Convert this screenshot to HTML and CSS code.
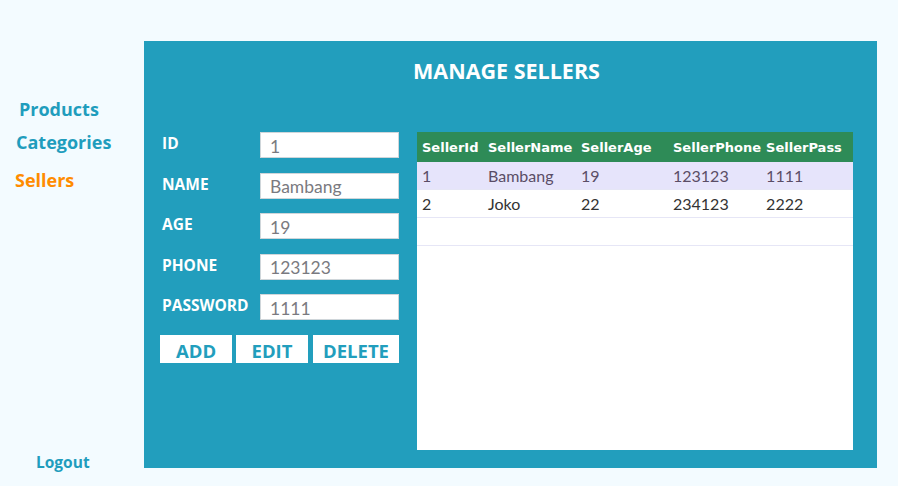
FILE: index.html
```html
<!DOCTYPE html>
<html lang="en">
<head>
    <meta charset="UTF-8">
    <title>Manage Sellers</title>
    <link rel="stylesheet" href="styles.css">
</head>
<body>
    <div class="app">
        <nav class="sidebar">
            <a class="nav-link products">Products</a>
            <a class="nav-link categories">Categories</a>
            <a class="nav-link sellers active">Sellers</a>
            <a class="logout">Logout</a>
        </nav>
        <main class="panel">
            <h1 class="title">MANAGE SELLERS</h1>
            <div class="content">
                <form class="seller-form">
                    <div class="field">
                        <label>ID</label>
                        <input type="text" value="1">
                    </div>
                    <div class="field">
                        <label>NAME</label>
                        <input type="text" value="Bambang">
                    </div>
                    <div class="field">
                        <label>AGE</label>
                        <input type="text" value="19">
                    </div>
                    <div class="field">
                        <label>PHONE</label>
                        <input type="text" value="123123">
                    </div>
                    <div class="field">
                        <label>PASSWORD</label>
                        <input type="text" value="1111">
                    </div>
                    <div class="buttons">
                        <button type="button" class="btn btn-add">ADD</button>
                        <button type="button" class="btn btn-edit">EDIT</button>
                        <button type="button" class="btn btn-delete">DELETE</button>
                    </div>
                </form>
                <div class="grid">
                    <table>
                        <thead>
                            <tr>
                                <th class="col-id">SellerId</th>
                                <th class="col-name">SellerName</th>
                                <th class="col-age">SellerAge</th>
                                <th class="col-phone">SellerPhone</th>
                                <th>SellerPass</th>
                            </tr>
                        </thead>
                        <tbody>
                            <tr class="selected">
                                <td>1</td>
                                <td>Bambang</td>
                                <td>19</td>
                                <td>123123</td>
                                <td>1111</td>
                            </tr>
                            <tr>
                                <td>2</td>
                                <td>Joko</td>
                                <td>22</td>
                                <td>234123</td>
                                <td>2222</td>
                            </tr>
                            <tr class="empty">
                                <td></td><td></td><td></td><td></td><td></td>
                            </tr>
                        </tbody>
                    </table>
                </div>
            </div>
        </main>
    </div>
</body>
</html>
```

FILE: styles.css
```css
html, body {
    margin: 0;
    padding: 0;
    width: 898px;
    height: 486px;
    overflow: hidden;
    background: #f3fbff;
    font-family: "Open Sans", "Noto Sans", sans-serif;
}
.app {
    display: flex;
    height: 486px;
}
.sidebar {
    width: 144px;
    display: flex;
    flex-direction: column;
    padding-top: 97px;
    box-sizing: border-box;
}
.nav-link {
    font-size: 18px;
    font-weight: bold;
    color: #1f9dbd;
    line-height: 24px;
    cursor: pointer;
}
.products {
    margin-left: 19px;
}
.categories {
    margin-left: 16px;
    margin-top: 9px;
}
.sellers {
    margin-left: 15px;
    margin-top: 14px;
}
.active {
    color: #ff8c00;
}
.logout {
    margin-top: auto;
    margin-bottom: 14px;
    margin-left: 36px;
    font-size: 15.5px;
    font-weight: bold;
    color: #1f9dbd;
    line-height: 20px;
}
.panel {
    margin-top: 41px;
    width: 733px;
    height: 427px;
    background: #229ebd;
    box-sizing: border-box;
    padding: 16px 24px 18px 16px;
    display: flex;
    flex-direction: column;
}
.title {
    margin: 0 0 47px 0;
    text-align: center;
    color: white;
    font-size: 21.5px;
    line-height: 28px;
    font-weight: bold;
}
.content {
    flex: 1;
    display: flex;
    gap: 18px;
}
.seller-form {
    width: 239px;
    display: flex;
    flex-direction: column;
    gap: 14.5px;
}
.field {
    display: flex;
    align-items: center;
    height: 26px;
}
.field label {
    width: 100px;
    padding-left: 2px;
    box-sizing: border-box;
    color: white;
    font-weight: bold;
    font-size: 15.5px;
    margin-top: -4px;
}
.field input {
    width: 139px;
    height: 26px;
    box-sizing: border-box;
    border: 1px solid #cfd6da;
    padding: 2px 0 0 9px;
    font-family: "Lato", sans-serif;
    font-size: 17.5px;
    color: #7a7a80;
    outline: none;
}
.buttons {
    display: flex;
    gap: 4px;
    margin-top: 0.5px;
}
.btn {
    height: 28px;
    border: none;
    background: white;
    color: #229ebd;
    font-family: "Open Sans", sans-serif;
    font-weight: bold;
    font-size: 18.5px;
    padding: 4px 0 0 0;
    line-height: 24px;
    cursor: pointer;
}
.btn-add, .btn-edit {
    width: 72px;
}
.btn-delete {
    width: 86px;
    margin-left: 1px;
}
.grid {
    flex: 1;
    background: white;
}
table {
    width: 100%;
    border-collapse: collapse;
    font-family: "Lato", sans-serif;
}
th {
    background: #2e8b57;
    color: white;
    font-family: "DejaVu Sans", sans-serif;
    font-size: 13px;
    font-weight: bold;
    text-align: left;
    height: 30px;
    padding: 0 0 0 5px;
    white-space: nowrap;
}
.col-id { width: 61px; }
.col-name { width: 88px; }
.col-age { width: 87px; }
.col-phone { width: 88px; }
td {
    height: 27px;
    padding: 0 0 0 5px;
    font-size: 16px;
    color: #333;
    border-bottom: 1px solid #e6e6f6;
}
.selected td {
    background: #e6e4fb;
    color: #5a4d66;
}
```
